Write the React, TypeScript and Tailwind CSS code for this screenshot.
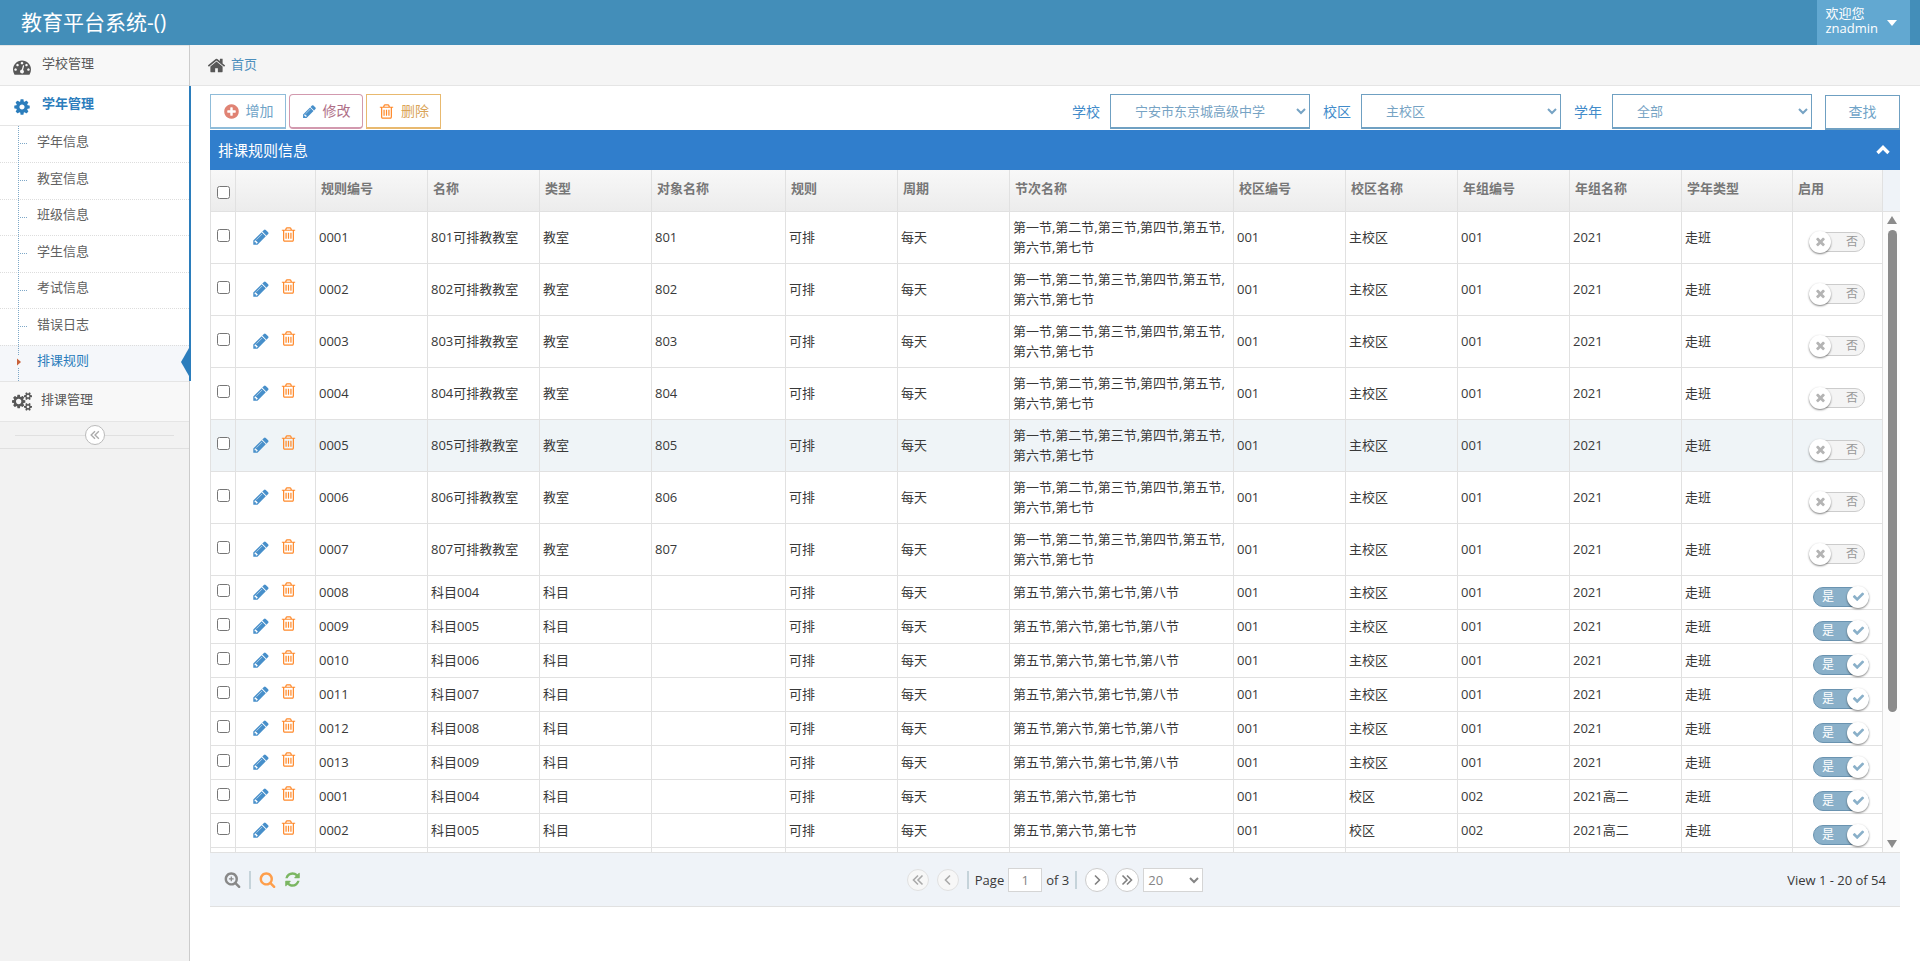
import React from 'react'
import { clsx } from 'clsx'

const ICONS = {
  dashboard:
    'M384 1152q0-53-37.5-90.5t-90.5-37.5-90.5 37.5-37.5 90.5 37.5 90.5 90.5 37.5 90.5-37.5 37.5-90.5zm192-448q0-53-37.5-90.5t-90.5-37.5-90.5 37.5-37.5 90.5 37.5 90.5 90.5 37.5 90.5-37.5 37.5-90.5zm428 481l101-382q6-26-7.5-48.5t-38.5-29.5-48 6.5-30 39.5l-101 382q-60 5-107 43.5t-63 98.5q-20 77 20 146t117 89 146-20 89-117q16-60-6-117t-72-91zm660-33q0-53-37.5-90.5t-90.5-37.5-90.5 37.5-37.5 90.5 37.5 90.5 90.5 37.5 90.5-37.5 37.5-90.5zm-640-640q0-53-37.5-90.5t-90.5-37.5-90.5 37.5-37.5 90.5 37.5 90.5 90.5 37.5 90.5-37.5 37.5-90.5zm448 192q0-53-37.5-90.5t-90.5-37.5-90.5 37.5-37.5 90.5 37.5 90.5 90.5 37.5 90.5-37.5 37.5-90.5zm320 448q0 261-141 483-19 29-54 29h-1402q-35 0-54-29-141-221-141-483 0-182 71-348t191-286 286-191 348-71 348 71 286 191 191 286 71 348z',
  cog: 'M1152 896q0-106-75-181t-181-75-181 75-75 181 75 181 181 75 181-75 75-181zm512-109v222q0 12-8 23t-20 13l-185 28q-19 54-39 91 35 50 107 138 10 12 10 25t-9 23q-27 37-99 108t-94 71q-12 0-26-9l-138-108q-44 23-91 38-16 136-29 186-7 28-36 28h-222q-14 0-24.5-8.5t-11.5-21.5l-28-184q-49-16-90-37l-141 107q-10 9-25 9-14 0-25-11-126-114-165-168-7-10-7-23 0-12 8-23 15-21 51-66.5t54-70.5q-27-50-41-99l-183-27q-13-2-21-12.5t-8-23.5v-222q0-12 8-23t19-13l186-28q14-46 39-92-40-57-107-138-10-12-10-24 0-10 9-23 26-36 98.5-107.5t94.5-71.5q13 0 26 10l138 107q44-23 91-38 16-136 29-186 7-28 36-28h222q14 0 24.5 8.5t11.5 21.5l28 184q49 16 90 37l142-107q9-9 24-9 13 0 25 10 129 119 165 170 7 8 7 22 0 12-8 23-15 21-51 66.5t-54 70.5q26 50 41 98l183 28q13 2 21 12.5t8 23.5z',
  cogs: 'M896 896q0-106-75-181t-181-75-181 75-75 181 75 181 181 75 181-75 75-181zm768 512q0-52-38-90t-90-38-90 38-38 90q0 53 37.5 90.5t90.5 37.5 90.5-37.5 37.5-90.5zm0-1024q0-52-38-90t-90-38-90 38-38 90q0 53 37.5 90.5t90.5 37.5 90.5-37.5 37.5-90.5zm-384 421v185q0 10-7 19.5t-16 10.5l-155 24q-11 35-32 76 34 48 90 115 7 11 7 20 0 12-7 19-23 30-82.5 89.5t-78.5 59.5q-11 0-21-7l-115-90q-37 19-77 31-11 108-23 155-7 24-30 24h-186q-11 0-20-7.5t-10-17.5l-23-153q-34-10-75-31l-118 89q-7 7-20 7-11 0-21-8-144-133-144-160 0-9 7-19 10-14 41-53t47-61q-23-44-35-82l-152-24q-10-1-17-9.5t-7-19.5v-185q0-10 7-19.5t16-10.5l155-24q11-35 32-76-34-48-90-115-7-11-7-20 0-12 7-20 22-30 82-89t79-59q11 0 21 7l115 90q34-18 77-32 11-108 23-154 7-24 30-24h186q11 0 20 7.5t10 17.5l23 153q34 10 75 31l118-89q8-7 20-7 11 0 21 8 144 133 144 160 0 8-7 19-12 16-42 54t-45 60q23 48 34 82l152 23q10 2 17 10.5t7 19.5zm640 533v140q0 16-149 31-12 27-30 52 51 113 51 138 0 4-4 7-122 71-124 71-8 0-46-47t-52-68q-20 2-30 2t-30-2q-14 21-52 68t-46 47q-2 0-124-71-4-3-4-7 0-25 51-138-18-25-30-52-149-15-149-31v-140q0-16 149-31 13-29 30-52-51-113-51-138 0-4 4-7 4-2 35-20t59-34 30-16q8 0 46 46.5t52 67.5q20-2 30-2t30 2q51-71 92-112l6-2q4 0 124 70 4 3 4 7 0 25-51 138 17 23 30 52 149 15 149 31zm0-1024v140q0 16-149 31-12 27-30 52 51 113 51 138 0 4-4 7-122 71-124 71-8 0-46-47t-52-68q-20 2-30 2t-30-2q-14 21-52 68t-46 47q-2 0-124-71-4-3-4-7 0-25 51-138-18-25-30-52-149-15-149-31v-140q0-16 149-31 13-29 30-52-51-113-51-138 0-4 4-7 4-2 35-20t59-34 30-16q8 0 46 46.5t52 67.5q20-2 30-2t30 2q51-71 92-112l6-2q4 0 124 70 4 3 4 7 0 25-51 138 17 23 30 52 149 15 149 31z',
  home: 'M1472 992v480q0 26-19 45t-45 19h-384v-384h-256v384h-384q-26 0-45-19t-19-45v-480q0-1 .5-3t.5-3l575-474 575 474q1 2 1 6zm223-69l-62 74q-8 9-21 11h-3q-13 0-21-7l-692-577-692 577q-12 8-24 7-13-2-21-11l-62-74q-8-10-7-23.5t11-21.5l719-599q32-26 76-26t76 26l244 204v-195q0-14 9-23t23-9h192q14 0 23 9t9 23v408l219 182q10 8 11 21.5t-7 23.5z',
  plusCircle:
    'M1344 960v-128q0-26-19-45t-45-19h-256v-256q0-26-19-45t-45-19h-128q-26 0-45 19t-19 45v256h-256q-26 0-45 19t-19 45v128q0 26 19 45t45 19h256v256q0 26 19 45t45 19h128q26 0 45-19t19-45v-256h256q26 0 45-19t19-45zm320-64q0 209-103 385.5t-279.5 279.5-385.5 103-385.5-103-279.5-279.5-103-385.5 103-385.5 279.5-279.5 385.5-103 385.5 103 279.5 279.5 103 385.5z',
  pencil:
    'M491 1536l91-91-235-235-91 91v107h128v128h107zm523-928q0-22-22-22-10 0-17 7l-542 542q-7 7-7 17 0 22 22 22 10 0 17-7l542-542q7-7 7-17zm-54-192l416 416-832 832h-416v-416zm683 96q0 53-37 90l-166 166-416-416 166-165q36-38 90-38 53 0 91 38l235 234q37 39 37 91z',
  trash:
    'M704 736v576q0 14-9 23t-23 9h-64q-14 0-23-9t-9-23v-576q0-14 9-23t23-9h64q14 0 23 9t9 23zm256 0v576q0 14-9 23t-23 9h-64q-14 0-23-9t-9-23v-576q0-14 9-23t23-9h64q14 0 23 9t9 23zm256 0v576q0 14-9 23t-23 9h-64q-14 0-23-9t-9-23v-576q0-14 9-23t23-9h64q14 0 23 9t9 23zm128 724v-948h-896v948q0 22 7 40.5t14.5 27 10.5 8.5h832q3 0 10.5-8.5t14.5-27 7-40.5zm-672-1076h448l-48-117q-7-9-17-11h-317q-10 2-17 11zm928 32v64q0 14-9 23t-23 9h-96v948q0 83-47 143.5t-113 60.5h-832q-66 0-113-58.5t-47-141.5v-952h-96q-14 0-23-9t-9-23v-64q0-14 9-23t23-9h309l70-167q15-37 54-63t79-26h320q40 0 79 26t54 63l70 167h309q14 0 23 9t9 23z',
  check:
    'M1671 566q0 40-28 68l-724 724-136 136q-28 28-68 28t-68-28l-136-136-362-362q-28-28-28-68t28-68l136-136q28-28 68-28t68 28l294 295 656-657q28-28 68-28t68 28l136 136q28 28 28 68z',
  times:
    'M1490 1322q0 40-28 68l-136 136q-28 28-68 28t-68-28l-294-294-294 294q-28 28-68 28t-68-28l-136-136q-28-28-28-68t28-68l294-294-294-294q-28-28-28-68t28-68l136-136q28-28 68-28t68 28l294 294 294-294q28-28 68-28t68 28l136 136q28 28 28 68t-28 68l-294 294 294 294q28 28 28 68z',
  search:
    'M1216 832q0-185-131.5-316.5t-316.5-131.5-316.5 131.5-131.5 316.5 131.5 316.5 316.5 131.5 316.5-131.5 131.5-316.5zm512 832q0 52-38 90t-90 38q-54 0-90-38l-343-342q-179 124-399 124-143 0-273.5-55.5t-225-150-150-225-55.5-273.5 55.5-273.5 150-225 225-150 273.5-55.5 273.5 55.5 225 150 150 225 55.5 273.5q0 220-124 399l343 343q37 37 37 90z',
  searchPlus:
    'M1024 800v64q0 13-9.5 22.5t-22.5 9.5h-160v160q0 13-9.5 22.5t-22.5 9.5h-64q-13 0-22.5-9.5t-9.5-22.5v-160h-160q-13 0-22.5-9.5t-9.5-22.5v-64q0-13 9.5-22.5t22.5-9.5h160v-160q0-13 9.5-22.5t22.5-9.5h64q13 0 22.5 9.5t9.5 22.5v160h160q13 0 22.5 9.5t9.5 22.5zM1216 832q0-185-131.5-316.5t-316.5-131.5-316.5 131.5-131.5 316.5 131.5 316.5 316.5 131.5 316.5-131.5 131.5-316.5zm512 832q0 52-38 90t-90 38q-54 0-90-38l-343-342q-179 124-399 124-143 0-273.5-55.5t-225-150-150-225-55.5-273.5 55.5-273.5 150-225 225-150 273.5-55.5 273.5 55.5 225 150 150 225 55.5 273.5q0 220-124 399l343 343q37 37 37 90z',
  refresh:
    'M1639 1056q0 5-1 7-64 268-268 434.5t-478 166.5q-146 0-282.5-55t-243.5-157l-129 129q-19 19-45 19t-45-19-19-45v-448q0-26 19-45t45-19h448q26 0 45 19t19 45-19 45l-137 137q71 66 161 102t187 36q134 0 250-65t186-179q11-17 53-117 8-23 30-23h192q13 0 22.5 9.5t9.5 22.5zm25-800v448q0 26-19 45t-45 19h-448q-26 0-45-19t-19-45 19-45l138-138q-148-137-349-137-134 0-250 65t-186 179q-11 17-53 117-8 23-30 23h-199q-13 0-22.5-9.5t-9.5-22.5v-7q65-268 270-434.5t480-166.5q146 0 284 55.5t245 156.5l130-129q19-19 45-19t45 19 19 45z',
}

function Icon({ name, className }: { name: keyof typeof ICONS; className?: string }) {
  return (
    <svg viewBox={name === 'cogs' ? '0 0 1920 1792' : '0 0 1792 1792'} fill="currentColor" className={clsx('shrink-0', className)} aria-hidden="true">
      <path d={ICONS[name]} />
    </svg>
  )
}

// Thin single / double angle used by the pager and the sidebar toggle
function Angle({ double, flip, className }: { double?: boolean; flip?: boolean; className?: string }) {
  return (
    <svg viewBox="0 0 14 14" fill="none" stroke="currentColor" strokeWidth="1.6" className={clsx('shrink-0', flip && 'rotate-180', className)} aria-hidden="true">
      {double ? <path d="M7 2.5 2.5 7 7 11.5M11.5 2.5 7 7l4.5 4.5" /> : <path d="M9 2.5 4.5 7 9 11.5" />}
    </svg>
  )
}

const subMenu = ['学年信息', '教室信息', '班级信息', '学生信息', '考试信息', '错误日志', '排课规则']

const columns = ['规则编号', '名称', '类型', '对象名称', '规则', '周期', '节次名称', '校区编号', '校区名称', '年组编号', '年组名称', '学年类型', '启用']

const LONG = '第一节,第二节,第三节,第四节,第五节,第六节,第七节'
const MID = '第五节,第六节,第七节,第八节'
const SHORT = '第五节,第六节,第七节'

type Row = { cells: string[]; enabled: boolean }

const rows: Row[] = [
  ...['1', '2', '3', '4', '5', '6', '7'].map((n) => ({
    cells: [`000${n}`, `80${n}可排教教室`, '教室', `80${n}`, '可排', '每天', LONG, '001', '主校区', '001', '2021', '走班'],
    enabled: false,
  })),
  ...[['0008', '004'], ['0009', '005'], ['0010', '006'], ['0011', '007'], ['0012', '008'], ['0013', '009']].map(([id, subject]) => ({
    cells: [id, `科目${subject}`, '科目', '', '可排', '每天', MID, '001', '主校区', '001', '2021', '走班'],
    enabled: true,
  })),
  ...[['0001', '004'], ['0002', '005']].map(([id, subject]) => ({
    cells: [id, `科目${subject}`, '科目', '', '可排', '每天', SHORT, '001', '校区', '002', '2021高二', '走班'],
    enabled: true,
  })),
]

function Cols() {
  return (
    <colgroup>
      <col className="w-[25px]" />
      <col className="w-[80px]" />
      <col className="w-[112px]" />
      <col className="w-[112px]" />
      <col className="w-[112px]" />
      <col className="w-[134px]" />
      <col className="w-[112px]" />
      <col className="w-[112px]" />
      <col className="w-[224px]" />
      <col className="w-[112px]" />
      <col className="w-[112px]" />
      <col className="w-[112px]" />
      <col className="w-[112px]" />
      <col className="w-[111px]" />
      <col className="w-[90px]" />
    </colgroup>
  )
}

function Toggle({ on, label }: { on: boolean; label: string }) {
  return (
    <label className={clsx('relative flex h-5 w-14 items-center rounded-full border text-xs', on ? 'ml-5 border-[#6a93b0] bg-[#8ab0c9] pl-2 text-white' : 'ml-4 justify-end border-[#ccc] bg-[#f4f4f4] pr-1.5 text-[#999]')}>
      <input type="checkbox" defaultChecked={on} aria-label={label} className="absolute inset-0 size-full cursor-pointer opacity-0" />
      <span>{on ? '是' : '否'}</span>
      <span className={clsx('pointer-events-none absolute -top-0.5 flex size-[22px] items-center justify-center rounded-full bg-white shadow-[0_1px_2px_rgba(0,0,0,0.5)]', on ? '-right-px text-[#8ab0c9]' : '-left-px text-[#b4b4b4]')}>
        <Icon name={on ? 'check' : 'times'} className="size-[13px]" />
      </span>
    </label>
  )
}

function FilterSelect({ id, label, value }: { id: string; label: string; value: string }) {
  return (
    <div className="flex items-center gap-2.5">
      <label htmlFor={id} className="text-sm text-[#428bca]">{label}</label>
      <select id={id} className="h-[35px] w-[200px] border border-b-2 border-[#6fa0c2] bg-white pl-5 text-[13px] text-[#76a3c4]">
        <option>{value}</option>
      </select>
    </div>
  )
}

function Sidebar() {
  return (
    <aside className="w-[190px] shrink-0 border-r border-[#ccc] bg-[#f2f2f2]">
      <nav>
        <ul>
          <li className="border-y border-[#e5e5e5] bg-[#f8f8f8]">
            <a href="#school" className="flex h-[39px] gap-[11px] pl-[13px] text-[#585858]">
              <Icon name="dashboard" className="mt-3 size-[18px]" />
              <span className="leading-[34px]">学校管理</span>
            </a>
          </li>
          <li className="relative bg-white">
            <span className="absolute inset-y-0 -right-0.5 w-0.5 bg-[#2b7dbc]" />
            <a href="#year" className="flex h-10 gap-[11px] border-b border-[#e5e5e5] pl-[13px] font-bold text-[#2b7dbc]">
              <Icon name="cog" className="mt-3 size-[18px]" />
              <span className="leading-[34px]">学年管理</span>
            </a>
            <ul className="relative grid h-[255px] auto-rows-fr">
              <span className="absolute inset-y-0 left-[18px] z-10 border-l border-dotted border-[#7ea8c8]" />
              {subMenu.map((item, i) => {
                const active = item === '排课规则'
                return (
                  <li key={item} className={clsx('relative', i > 0 && 'border-t border-dotted border-[#ddd]', active && 'bg-[#f5f7fa]')}>
                    <a href={`#sub-${i}`} className={clsx('flex h-full items-center pb-[5px] pl-[37px]', active ? 'text-[#2b7dbc]' : 'text-[#616161]')}>
                      {item}
                    </a>
                    {active ? (
                      <>
                        <svg viewBox="0 0 7 12" className="absolute left-4 top-2.5 z-20 h-3 w-[7px]" aria-hidden="true">
                          <path d="M0 0h7v12H0z" fill="#f5f7fa" />
                          <path d="M1 2.5 5 6 1 9.5z" fill="#c86139" />
                        </svg>
                        <svg viewBox="0 0 8 28" className="absolute right-0 top-0.5 h-7 w-2" aria-hidden="true">
                          <path d="M8 0v28L0 14z" fill="#2b7dbc" />
                        </svg>
                      </>
                    ) : (
                      <span className="absolute left-5 top-[17px] w-[7px] border-t border-dotted border-[#7ea8c8]" />
                    )}
                  </li>
                )
              })}
            </ul>
          </li>
          <li className="border-y border-[#e5e5e5] bg-[#f8f8f8]">
            <a href="#course" className="flex h-[39px] gap-[9px] pl-3 text-[#585858]">
              <Icon name="cogs" className="mt-2.5 h-[19px] w-5" />
              <span className="leading-[34px]">排课管理</span>
            </a>
          </li>
        </ul>
      </nav>
      <div className="flex h-[27px] items-center border-b border-[#e0e0e0] px-[15px]">
        <span className="h-px flex-1 bg-[#e0e0e0]" />
        <button aria-label="收起菜单" className="flex size-5 items-center justify-center rounded-full border border-[#bbb] bg-white text-[#aaa]">
          <Angle double className="size-3" />
        </button>
        <span className="h-px flex-1 bg-[#e0e0e0]" />
      </div>
    </aside>
  )
}

function Toolbar() {
  return (
    <div className="flex h-9 justify-between">
      <div className="flex gap-[3px] text-sm">
        <button className="flex h-[35px] w-[76px] items-center justify-center gap-1.5 border border-b-2 border-[#8fbcd9] bg-white text-[#6fa3c7]">
          <Icon name="plusCircle" className="size-[17px] text-[#e08374]" />
          增加
        </button>
        <button className="flex h-[35px] w-[74px] items-center justify-center gap-1.5 rounded-sm border border-b-2 border-[#d299ae] bg-white text-[#af6f87]">
          <Icon name="pencil" className="size-[15px] text-[#478fca]" />
          修改
        </button>
        <button className="flex h-[35px] w-[75px] items-center justify-center gap-1.5 border border-b-2 border-[#e8b96f] bg-white text-[#daa458]">
          <Icon name="trash" className="size-[17px] text-[#ff892a]" />
          删除
        </button>
      </div>
      <div className="flex items-start gap-[13px]">
        <FilterSelect id="school" label="学校" value="宁安市东京城高级中学" />
        <FilterSelect id="campus" label="校区" value="主校区" />
        <FilterSelect id="year" label="学年" value="全部" />
        <button className="mt-px h-[35px] w-[75px] border border-b-2 border-[#6fa0c2] bg-white text-sm text-[#6fa3c7]">查找</button>
      </div>
    </div>
  )
}

function Grid() {
  return (
    <section>
      <div className="flex h-10 items-center justify-between bg-[#307ecc] px-2 text-white">
        <h2 className="text-[15px]">排课规则信息</h2>
        <button aria-label="折叠" className="px-0.5">
          <svg viewBox="0 0 14 10" className="h-2.5 w-3.5" fill="none" stroke="currentColor" strokeWidth="3.4" aria-hidden="true">
            <path d="M1.5 8 7 2.5 12.5 8" />
          </svg>
        </button>
      </div>

      {/* Header */}
      <div className="flex border-b border-[#e1e1e1] bg-[#eff3f8]">
        <table className="w-full table-fixed border-separate border-spacing-0 border-l border-[#e1e1e1]">
          <Cols />
          <thead>
            <tr className="h-[41px] bg-linear-to-b from-[#f8f8f8] to-[#ececec] text-left text-[#777]">
              <th className="border-r border-[#e1e1e1]">
                <input type="checkbox" aria-label="全选" className="mx-auto mt-1 block size-[13px]" />
              </th>
              <th className="border-r border-[#e1e1e1]"></th>
              {columns.map((c) => (
                <th key={c} className="border-r border-[#e1e1e1] px-[5px] pb-1 font-bold">{c}</th>
              ))}
            </tr>
          </thead>
        </table>
        <div className="w-[17px] shrink-0" />
      </div>

      {/* Body */}
      <div className="flex h-[calc(100vh-321px)] overflow-hidden">
        <div className="min-w-0 flex-1 overflow-hidden">
          <table className="w-full table-fixed border-separate border-spacing-0 border-l border-[#e1e1e1]">
            <Cols />
            <tbody>
              {rows.map((row, i) => (
                <tr key={i} className={clsx('h-[34px]', i === 4 && 'bg-[#eff4f7]')}>
                  <td className="border-r border-b border-[#e1e1e1] pb-1">
                    <input type="checkbox" aria-label={`选择 ${row.cells[0]}`} className="mx-auto block size-[13px]" />
                  </td>
                  <td className="border-r border-b border-[#e1e1e1] pb-0.5">
                    <div className="flex items-center gap-2.5 pl-4">
                      <button aria-label="修改" className="text-[#478fca]"><Icon name="pencil" className="size-[18px]" /></button>
                      <button aria-label="删除" className="pb-1 text-[#ff892a]"><Icon name="trash" className="size-[17px]" /></button>
                    </div>
                  </td>
                  {row.cells.map((cell, j) => (
                    <td key={j} className="border-r border-b border-[#e1e1e1] px-[3px] pt-[5px] pb-1.5 leading-5">{cell}</td>
                  ))}
                  <td className="border-r border-b border-[#e1e1e1] pt-2">
                    <Toggle on={row.enabled} label={`启用 ${row.cells[0]}`} />
                  </td>
                </tr>
              ))}
              <tr className="h-[34px]" aria-hidden="true">
                {Array.from({ length: 15 }, (_, i) => (
                  <td key={i} className="border-r border-b border-[#e1e1e1]" />
                ))}
              </tr>
            </tbody>
          </table>
        </div>
        <div className="flex w-[17px] shrink-0 flex-col items-center bg-[#fcfcfc] py-1 pl-px text-[#8b8b8b]">
          <svg viewBox="0 0 10 8" className="h-2 w-2.5" fill="currentColor" aria-hidden="true"><path d="M5 0l5 8H0z" /></svg>
          <div className="mt-1.5 flex-1">
            <div className="h-[79%] w-[9px] rounded-full bg-[#8b8b8b]" />
          </div>
          <svg viewBox="0 0 10 8" className="h-2 w-2.5" fill="currentColor" aria-hidden="true"><path d="M5 8l5-8H0z" /></svg>
        </div>
      </div>

      {/* Pager */}
      <div className="grid h-[55px] grid-cols-3 items-center border-y border-[#e1e1e1] bg-[#eff3f8] px-3.5">
        <div className="flex items-center gap-2">
          <button aria-label="查看" className="text-[#888]"><Icon name="searchPlus" className="size-[17px]" /></button>
          <span className="h-[18px] w-0.5 bg-[#c5d3da]" />
          <button aria-label="搜索" className="text-[#fe9e4b]"><Icon name="search" className="size-[17px]" /></button>
          <button aria-label="刷新" className="text-[#7bb662]"><Icon name="refresh" className="size-[17px]" /></button>
        </div>
        <div className="flex items-center justify-center whitespace-nowrap">
          <button disabled aria-label="首页" className="mr-2 flex size-[22px] items-center justify-center rounded-full border border-[#e1e1e1] bg-[#f7f7f7] text-[#aaa]">
            <Angle double className="size-3.5" />
          </button>
          <button disabled aria-label="上一页" className="flex size-[22px] items-center justify-center rounded-full border border-[#e1e1e1] bg-[#f7f7f7] text-[#aaa]">
            <Angle className="size-3.5" />
          </button>
          <span className="mr-1.5 ml-2 h-[18px] w-0.5 bg-[#c5d3da]" />
          <label htmlFor="page" className="pt-0.5">Page</label>
          <input id="page" defaultValue="1" className="mx-1 h-6 w-[34px] border border-[#d5d5d5] bg-white text-center text-[#858585]" />
          <span className="pt-0.5">of 3</span>
          <span className="mr-2 ml-1.5 h-[18px] w-0.5 bg-[#c5d3da]" />
          <button aria-label="下一页" className="mr-1.5 flex size-6 items-center justify-center rounded-full border border-[#ccc] bg-white text-[#808080]">
            <Angle flip className="size-3.5" />
          </button>
          <button aria-label="末页" className="mr-1 flex size-6 items-center justify-center rounded-full border border-[#ccc] bg-white text-[#808080]">
            <Angle double flip className="size-3.5" />
          </button>
          <select aria-label="每页条数" className="h-6 w-[60px] border border-[#d5d5d5] bg-white text-[#858585]">
            <option>20</option>
          </select>
        </div>
        <div className="pt-0.5 text-right">View 1 - 20 of 54</div>
      </div>
    </section>
  )
}

export default function App() {
  return (
    <div className="flex min-h-screen flex-col bg-white font-['Open_Sans','Noto_Sans_CJK_SC',sans-serif] text-[13px] text-[#393939]">
      {/* Top bar */}
      <header className="flex h-[45px] justify-between bg-[#438eb9] pr-2.5 text-white">
        <h1 className="pl-[21px] text-[21px] leading-[44px]">教育平台系统-()</h1>
        <button className="flex items-center gap-[9px] bg-[#62a8d1] pl-2 pr-[13px] text-left leading-[15px]">
          <span className="pb-1">欢迎您<br />znadmin</span>
          <svg viewBox="0 0 10 6" className="h-1.5 w-2.5" fill="currentColor" aria-hidden="true"><path d="M0 0h10L5 6z" /></svg>
        </button>
      </header>

      <div className="flex flex-1">
        <Sidebar />
        <main className="min-w-0 flex-1">
          <div className="flex h-[41px] items-center gap-[5px] border-b border-[#e5e5e5] bg-[#f5f5f5] pl-[17px]">
            <Icon name="home" className="size-[19px] text-[#585858]" />
            <a href="#home" className="pb-px text-[#4c8fbd]">首页</a>
          </div>
          <div className="px-5 pt-2">
            <Toolbar />
            <Grid />
          </div>
        </main>
      </div>
    </div>
  )
}
